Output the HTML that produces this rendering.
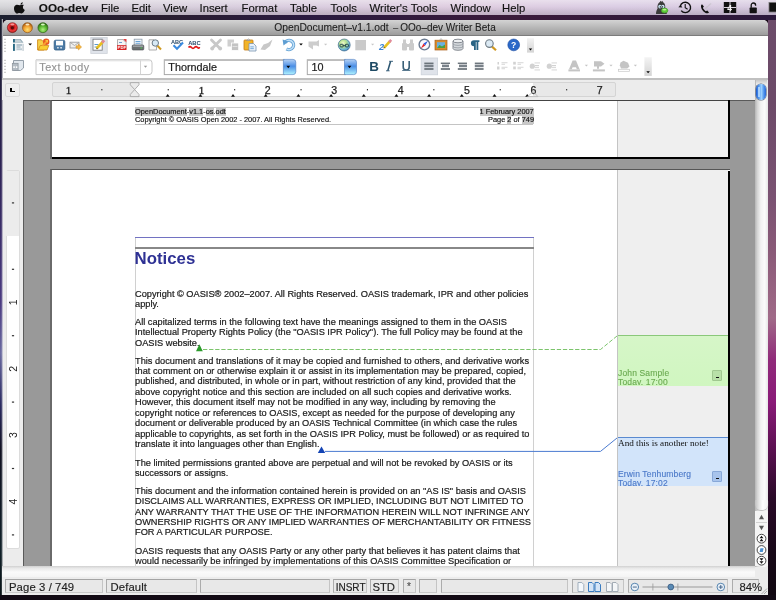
<!DOCTYPE html>
<html><head><meta charset="utf-8">
<style>
*{margin:0;padding:0;box-sizing:border-box}
html,body{width:776px;height:600px;overflow:hidden}
body{position:relative;will-change:transform;font-family:"Liberation Sans",sans-serif;background:#1a0c1a}
.a{position:absolute}
.doctext{position:absolute;left:0;top:0;will-change:transform}
.t{position:absolute;white-space:pre;line-height:1}
.dl{position:absolute;left:135px;white-space:pre;font-size:9.22px;-webkit-text-stroke:0.2px #222;line-height:1;color:#161616}
.hd{position:absolute;white-space:pre;font-size:7.4px;line-height:7.6px;color:#111;-webkit-text-stroke:0.15px #111}
.cn{position:absolute;white-space:pre;font-size:8.5px;line-height:9px;letter-spacing:0.15px;-webkit-text-stroke:0.12px currentColor}
.btn{position:absolute;width:10px;height:10.5px;background:#b8e0a8;border:1px solid #a0c890;border-radius:1px}
.btn:after{content:"";position:absolute;left:3px;top:5.5px;width:3px;height:1.5px;background:#111}
.m{position:absolute;top:1.5px;font-size:11.3px;color:#111;white-space:pre;line-height:12px;-webkit-text-stroke:0.15px #111}
.sb{position:absolute;top:579.2px;height:14px;background:#e8e8e8;border-style:solid;border-width:1.5px 1px 1px 1.5px;border-color:#a4a4a4 #c4c4c4 #cacaca #acacac}
.sb span{position:absolute;top:0.7px;white-space:pre;font-size:11.3px;line-height:12px;color:#222;-webkit-text-stroke:0.15px #222}
</style></head><body>
<div class="a" style="left:768px;top:0;width:8px;height:600px;background:linear-gradient(180deg,#6c4c6a 0%,#6c4a68 17%,#7a5272 33%,#8a5a78 42%,#a06a88 53%,#902a7a 60%,#8a1a78 67%,#5a1050 75%,#2a0a28 83%,#180818 92%,#100810 100%)"></div>
<div class="a" style="left:0;top:595px;width:776px;height:5px;background:#120a14"></div>
<div class="a" style="left:0;top:15px;width:776px;height:5px;background:linear-gradient(90deg,#1c2030 0%,#2a1e30 20%,#2a1a40 40%,#3a1a3a 65%,#2c1a3c 100%)"></div>
<div class="a" style="left:0;top:19px;width:3px;height:576px;background:linear-gradient(90deg,rgba(236,236,236,0) 0%,rgba(236,236,236,0) 40%,rgba(236,236,236,0.55) 75%,#e4e4e8 100%),linear-gradient(180deg,#1a1e2c 0%,#2a2050 23%,#4a3a80 49%,#6a6aa0 58%,#2a2a60 67%,#101020 75%,#102028 92%,#0a1418 100%)"></div>
<div id="menubar" class="a" style="left:0;top:0;width:776px;height:15px;background:linear-gradient(180deg,rgba(255,255,255,0.45) 0%,rgba(255,255,255,0.12) 45%,rgba(0,0,0,0.12) 100%),linear-gradient(90deg,#cfcfd3 0%,#d2ccd6 12%,#d4c6da 35%,#dac6dc 60%,#d6c6e0 80%,#d2c4dc 100%)">
  <div class="m" style="left:38.8px;font-weight:bold;font-size:11.7px">OOo-dev</div>
  <div class="m" style="left:101px">File</div>
  <div class="m" style="left:131.5px">Edit</div>
  <div class="m" style="left:163px">View</div>
  <div class="m" style="left:199.5px">Insert</div>
  <div class="m" style="left:241.5px">Format</div>
  <div class="m" style="left:290px">Table</div>
  <div class="m" style="left:330.5px">Tools</div>
  <div class="m" style="left:369.5px;font-size:11.45px">Writer's Tools</div>
  <div class="m" style="left:450.5px">Window</div>
  <div class="m" style="left:502px">Help</div>
</div>
<!-- window -->
<div class="a" style="left:2.6px;top:19.5px;width:765.4px;height:575.5px;background:#ececec;border-radius:5px 5px 0 0;overflow:hidden">
  <div class="a" style="left:0;top:0;width:766px;height:16.5px;background:linear-gradient(180deg,#d4d4d4 0%,#bababa 45%,#9c9c9c 100%);border-bottom:1px solid #7c7c7c"></div>
  <div class="t" style="left:271.6px;top:2.6px;font-size:10.3px;line-height:12px;color:#222;-webkit-text-stroke:0.1px #222">OpenDocument–v1.1.odt</div><div class="t" style="left:390.5px;top:2.6px;font-size:9.5px;line-height:12px;color:#222">–</div><div class="t" style="left:397.7px;top:2.6px;font-size:10.0px;line-height:12px;color:#222;-webkit-text-stroke:0.1px #222">OOo–dev Writer Beta</div>
  <div class="a" style="left:0;top:16.5px;width:766px;height:43px;background:#fff"></div>
  <div class="a" style="left:0;top:59.5px;width:766px;height:1px;background:#a8a8a8"></div>
</div>
<svg class="a" style="left:0;top:0" width="776" height="100">
 <defs>
  <linearGradient id="blueBtn" x1="0" y1="0" x2="0" y2="1">
   <stop offset="0" stop-color="#b4d0f4"/><stop offset="0.45" stop-color="#4a8ee6"/><stop offset="1" stop-color="#b0f4ff"/>
  </linearGradient>
  <linearGradient id="ovf" x1="0" y1="0" x2="0" y2="1">
   <stop offset="0" stop-color="#f4f4f4"/><stop offset="1" stop-color="#d4d4d4"/>
  </linearGradient>
  <radialGradient id="globe" cx="0.4" cy="0.35" r="0.7">
   <stop offset="0" stop-color="#f4fcd0"/><stop offset="0.4" stop-color="#b4e090"/><stop offset="0.75" stop-color="#70b8d4"/><stop offset="1" stop-color="#3a7ab4"/>
  </radialGradient>
 </defs>
 <!-- grips -->
 <g fill="#c4c4c4">
  <rect x="4" y="38.8" width="2" height="1"/><rect x="4" y="41.8" width="2" height="1"/><rect x="4" y="44.8" width="2" height="1"/><rect x="4" y="47.8" width="2" height="1"/><rect x="4" y="50.8" width="2" height="1"/>
  <rect x="4" y="59.8" width="2" height="1"/><rect x="4" y="62.8" width="2" height="1"/><rect x="4" y="65.8" width="2" height="1"/><rect x="4" y="68.8" width="2" height="1"/><rect x="4" y="71.8" width="2" height="1"/>
 </g>
 <!-- new doc -->
 <path d="M13 39 H20.5 L23.2 42.2 V43 H13 Z" fill="#8aa4b0"/>
 <path d="M15 39.6 H19.8 L22 42.2 H15 Z" fill="#c4d0d6"/>
 <rect x="13" y="39" width="1.8" height="3.6" fill="#2a6a84"/>
 <rect x="12.6" y="42.6" width="11" height="1.3" fill="#f4f6f8"/>
 <rect x="13" y="43.9" width="10.5" height="7" fill="#eef2f4"/>
 <rect x="13" y="43.9" width="1.9" height="7" fill="#2a6a84"/>
 <rect x="22.6" y="43.9" width="1" height="7" fill="#b8c4ca"/>
 <rect x="16.5" y="44.5" width="5.5" height="1" fill="#7a96a8"/><rect x="16.5" y="46.5" width="4" height="1" fill="#8aa2b2"/><rect x="16.5" y="48.5" width="5.5" height="1.2" fill="#a8bac6"/>
 <path d="M28.3 43.5 H32 L30.15 45.5 Z" fill="#000"/>
 <!-- open folder -->
 <path d="M37.6 39.8 H41.5 L42.5 41 H44 V50 H37.6 Z" fill="#f6d24a" stroke="#d08a18" stroke-width="0.9"/>
 <path d="M38.2 50 L40.2 45.5 H48.8 L47 50 Z" fill="#f8d030" stroke="#d08a18" stroke-width="0.8"/>
 <circle cx="46.2" cy="41.8" r="3.2" fill="#e85a20"/>
 <path d="M42.5 45.8 L47.2 40.8" stroke="#f8a030" stroke-width="1.8"/>
 <path d="M45 40 H48 V43 Z" fill="#fcc040"/>
 <!-- save -->
 <rect x="54.2" y="40.2" width="10.6" height="9.8" rx="1.5" fill="#4a7aa6" stroke="#2e5a84" stroke-width="0.8"/>
 <rect x="56" y="40.8" width="7" height="4.6" fill="#fafcfd"/>
 <rect x="57" y="47" width="1.8" height="1.5" fill="#cfdae4"/><rect x="60.2" y="47" width="1.8" height="1.5" fill="#cfdae4"/>
 <!-- email -->
 <rect x="70" y="42.2" width="9" height="5.8" fill="#f0f0f0" stroke="#9a9a9a" stroke-width="0.9"/>
 <path d="M70.5 42.7 L74.5 45.5 L78.5 42.7" stroke="#a0a0a0" stroke-width="0.8" fill="none"/>
 <path d="M76 45.8 H78.4 V44 L81.6 47 L78.4 50 V48.2 H76 Z" fill="#f6b840" stroke="#d08a20" stroke-width="0.5"/>
 <!-- edit mode pressed -->
 <rect x="90.8" y="37.4" width="16.4" height="16" fill="#dfe3ea" stroke="#ccd1d8" stroke-width="0.8"/>
 <rect x="93" y="39.2" width="9.2" height="11" fill="#fff" stroke="#787c82" stroke-width="0.9"/>
 <rect x="94.5" y="44" width="4" height="1" fill="#5a9ad0"/><rect x="94.5" y="46.5" width="3" height="1" fill="#5a9ad0"/>
 <path d="M96.5 48.5 L103.2 41.5" stroke="#e8c020" stroke-width="2.6"/>
 <path d="M102 42.7 L104.3 40.3" stroke="#e08a9a" stroke-width="2.6"/>
 <path d="M96 49.2 L97 47.8 L97.8 48.6 Z" fill="#333"/>
 <!-- pdf -->
 <path d="M117.5 39.5 H123 L126 42.5 V49.5 H117.5 Z" fill="#f4f4f4" stroke="#a8a8a8" stroke-width="0.9"/>
 <rect x="119" y="42" width="3" height="1" fill="#6aa0d0"/>
 <rect x="117" y="45.2" width="9.4" height="4.8" fill="#d82020"/>
 <text x="117.6" y="49.4" font-family="Liberation Sans" font-weight="bold" font-size="4.2" fill="#fff">PDF</text>
 <path d="M123 39 L126.5 39 L126.5 42.5 Z" fill="#e04040"/>
 <!-- print -->
 <rect x="134.2" y="39.2" width="7.8" height="6" fill="#f4f6fa" stroke="#8a9aa8" stroke-width="0.8"/>
 <rect x="135.5" y="41" width="5" height="0.9" fill="#5a9ad0"/><rect x="135.5" y="42.8" width="5" height="0.9" fill="#5a9ad0"/>
 <rect x="132.2" y="45" width="11.6" height="5" rx="1" fill="#6a6e70" stroke="#4a4e50" stroke-width="0.6"/>
 <rect x="133" y="45.4" width="10" height="1.6" fill="#9a9ea2"/>
 <rect x="140.5" y="47.5" width="1.6" height="1" fill="#4ad04a"/>
 <!-- preview -->
 <path d="M149 39.8 H154 L156.5 42.3 V50 H149 Z" fill="#f8f8f8" stroke="#a4a4a4" stroke-width="0.9"/>
 <path d="M157.5 45.8 L161 49.5" stroke="#d09a20" stroke-width="2"/>
 <circle cx="155.3" cy="43" r="3.2" fill="#d8eaf6" stroke="#6a7a86" stroke-width="1"/>
 <!-- spell -->
 <text x="171" y="43.6" font-family="Liberation Sans" font-weight="bold" font-size="5.6" fill="#2a4a6a">ABC</text>
 <path d="M173.5 45.3 L177 48.8 L183 42.5" stroke="#3a8ae0" stroke-width="2.1" fill="none"/>
 <!-- autospell -->
 <text x="188.2" y="45" font-family="Liberation Sans" font-weight="bold" font-size="5.8" fill="#2a4a6a">ABC</text>
 <path d="M188.5 47.5 Q190 45.8 191.5 47.5 T194.5 47.5 T197.5 47.5 T199.5 47" stroke="#e01818" stroke-width="1.6" fill="none"/>
 <!-- cut gray -->
 <g stroke="#c8c8c8" stroke-width="2.8" stroke-linecap="round" fill="none">
  <path d="M211.5 40 L220 48.5"/><path d="M220.5 40 L212 48.5"/>
 </g>
 <circle cx="212.2" cy="48.5" r="1.9" fill="#c8c8c8"/><circle cx="220.2" cy="48.5" r="1.9" fill="#c8c8c8"/>
 <!-- copy gray -->
 <rect x="227.5" y="39.5" width="6.5" height="7" fill="#cfcfcf"/>
 <rect x="231.5" y="43" width="7.2" height="7.5" fill="#c4c4c4" stroke="#fff" stroke-width="0.8"/>
 <rect x="232.5" y="46" width="5" height="0.8" fill="#e8e8e8"/>
 <!-- paste -->
 <rect x="244" y="40" width="9" height="10" rx="0.8" fill="#f2b428" stroke="#c47a10" stroke-width="0.8"/>
 <path d="M246.5 40.5 Q248.5 37.5 250.5 40.5 Z" fill="#d8d8d8" stroke="#8a8a8a" stroke-width="0.6"/>
 <path d="M249 43.5 H253.5 L256 46 V51 H249 Z" fill="#eaf2fa" stroke="#7a96b0" stroke-width="0.8"/>
 <rect x="250.3" y="46.5" width="3.5" height="0.8" fill="#5a9ad0"/><rect x="250.3" y="48.3" width="3.5" height="0.8" fill="#5a9ad0"/>
 <!-- clone format gray -->
 <path d="M260.5 49.5 L263.5 44.5 L268 43 L272.5 39.5 L270 46 L265 50 Z" fill="#c8c8c8"/>
 <!-- undo -->
 <path d="M285 42.8 A4.6 4.6 0 1 1 286.5 48.8" stroke="#5e9ed2" stroke-width="3.2" fill="none"/>
 <path d="M285 42.8 A4.6 4.6 0 1 1 286.5 48.8" stroke="#c0e0f8" stroke-width="1.6" fill="none"/>
 <path d="M282.6 39.5 L288.5 41.5 L283.5 45.5 Z" fill="#5e9ed2"/>
 <path d="M299.2 43.5 H302.8 L301 45.5 Z" fill="#000"/>
 <!-- redo gray -->
 <path d="M308.5 41.5 H316.5 L319 40 V46.5 L316.5 45.5 H313 V49.5 L308.5 46.5 Z" fill="#cdcdcd"/>
 <path d="M324 43.8 H327.2 L325.6 45.6 Z" fill="#c8c8c8"/>
 <!-- globe -->
 <circle cx="344.2" cy="45" r="6" fill="url(#globe)" stroke="#2a5a80" stroke-width="0.6"/>
 <rect x="340" y="44.3" width="3.3" height="2.6" rx="0.8" fill="none" stroke="#2a4a50" stroke-width="1"/>
 <rect x="345.2" y="44.3" width="3.3" height="2.6" rx="0.8" fill="none" stroke="#2a4a50" stroke-width="1"/>
 <rect x="342.5" y="45.2" width="3.5" height="0.9" fill="#2a4a50"/>
 <!-- table gray -->
 <rect x="355.3" y="40" width="10.7" height="10.3" fill="#cacaca"/>
 <path d="M371 43.8 H374.2 L372.6 45.6 Z" fill="#c8c8c8"/>
 <!-- draw -->
 <text x="379" y="49.6" font-family="Liberation Sans" font-weight="bold" font-size="9.2" font-style="italic" fill="#3a84d8">2</text>
 <path d="M384 47.8 L390 41.2" stroke="#e8c020" stroke-width="2.6"/>
 <path d="M389.2 42.1 L391.2 39.9" stroke="#e08a9a" stroke-width="2.6"/>
 <path d="M383.3 48.6 L384 47 L385 47.8 Z" fill="#333"/>
 <!-- binoculars gray -->
 <g fill="#cbcbcb">
  <rect x="403" y="39.5" width="3" height="4"/><rect x="410" y="39.5" width="3" height="4"/>
  <rect x="402" y="43" width="5" height="7.5" rx="1"/><rect x="409" y="43" width="5" height="7.5" rx="1"/>
  <rect x="406" y="44" width="4" height="3"/>
 </g>
 <!-- navigator compass -->
 <circle cx="424.4" cy="44.6" r="5.3" fill="#f8f8fc" stroke="#6a7a90" stroke-width="1.4"/>
 <path d="M420.8 48.4 L423.6 43.6 L425.2 45.6 Z" fill="#e82424"/>
 <path d="M428 40.8 L423.6 43.6 L425.2 45.6 Z" fill="#2a5ae0"/>
 
 <!-- gallery -->
 <rect x="435" y="40.2" width="12" height="9.8" fill="#d88c2c" stroke="#a8601a" stroke-width="0.7"/>
 <rect x="437" y="42.2" width="8" height="5.8" fill="#6ab0e0"/>
 <path d="M437 48 L439.5 45 L442 46.5 L445 44.5 V48 Z" fill="#4aa040"/>
 <path d="M439.5 40.2 L441 38.6 L442.5 40.2" stroke="#888" stroke-width="0.6" fill="none"/>
 <!-- database -->
 <path d="M453 41 V48.5 A5 1.8 0 0 0 463 48.5 V41" fill="#d4d8dc" stroke="#7a8088" stroke-width="0.9"/>
 <ellipse cx="458" cy="41" rx="5" ry="1.8" fill="#eef0f2" stroke="#7a8088" stroke-width="0.9"/>
 <path d="M453 43.6 A5 1.8 0 0 0 463 43.6 M453 46.1 A5 1.8 0 0 0 463 46.1" stroke="#8a9098" stroke-width="0.7" fill="none"/>
 <!-- pilcrow -->
 <path d="M474 40.2 H479.4 V42 H478.3 V50 H476.5 V42 H475.8 V50 H474 V46.2 A3.1 3 0 0 1 474 40.2 Z" fill="#2a6484"/>
 <!-- zoom -->
 <path d="M492 46.6 L496 50.2" stroke="#d09820" stroke-width="2.2"/>
 <circle cx="489.4" cy="43.6" r="3.8" fill="#dceaf4" stroke="#6e7a84" stroke-width="1.1"/>
 <!-- help -->
 <circle cx="513.7" cy="44.9" r="5.9" fill="#2a68c8" stroke="#1a4aa0" stroke-width="0.6"/>
 <text x="510.9" y="48.4" font-family="Liberation Sans" font-weight="bold" font-size="8.6" fill="#fff">?</text>
 <!-- overflow 1 -->
 <rect x="527" y="38.2" width="7" height="14.4" fill="url(#ovf)"/>
 <path d="M528.8 48.6 H532.2 L530.5 50.4 Z" fill="#000"/>

 <!-- ===== toolbar 2 ===== -->
 <!-- styles icon -->
 <path d="M13.5 60.5 H23.5 V68 L20.5 70.5 H13.5 Z" fill="#e2e8ee" stroke="#8a96a2" stroke-width="0.9"/>
 <rect x="12.3" y="63.3" width="5.8" height="7.2" fill="#b4bcc4" stroke="#8a929a" stroke-width="0.7"/>
 <rect x="13.3" y="66.3" width="1.5" height="1.7" fill="#fff"/><rect x="15.8" y="66.3" width="1.5" height="1.7" fill="#fff"/>
 <!-- text body combo -->
 <path d="M36 59.8 H149 Q152 59.8 152 62.8 V71.6 Q152 74.6 149 74.6 H36 Z" fill="#fff" stroke="#c6c6c6" stroke-width="1"/>
 <rect x="36.5" y="60.3" width="114" height="1" fill="#dedede"/>
 <rect x="140" y="60.3" width="1" height="14" fill="#d4d4d4"/>
 <path d="M143.8 65.8 H147.2 L145.5 67.8 Z" fill="#999"/>
 <!-- font combo -->
 <rect x="164.3" y="59.8" width="120" height="14.8" fill="#fff" stroke="#a8a8a8" stroke-width="1"/>
 <rect x="164.8" y="59.6" width="119" height="1.4" fill="#bdbdbd"/>
 <path d="M283.4 59.4 H293 Q295.8 59.4 295.8 62.2 V71.8 Q295.8 74.6 293 74.6 H283.4 Z" fill="url(#blueBtn)" stroke="#4a7ac0" stroke-width="0.6"/>
 <path d="M286.4 65.8 H290.2 L288.3 68.2 Z" fill="#000"/>
 <!-- size combo -->
 <rect x="307.3" y="59.8" width="38" height="14.8" fill="#fff" stroke="#a8a8a8" stroke-width="1"/>
 <rect x="307.8" y="59.6" width="37" height="1.4" fill="#bdbdbd"/>
 <path d="M344.5 59.4 H353.7 Q356.5 59.4 356.5 62.2 V71.8 Q356.5 74.6 353.7 74.6 H344.5 Z" fill="url(#blueBtn)" stroke="#4a7ac0" stroke-width="0.6"/>
 <path d="M347.6 65.8 H351.4 L349.5 68.2 Z" fill="#000"/>
 <!-- B I U -->
 <text x="369.3" y="70.8" font-family="Liberation Sans" font-weight="bold" font-size="13.4" fill="#1e4a64">B</text>
 <path d="M390.6 61.3 L387.8 70.8" stroke="#2a5470" stroke-width="1.5"/>
 <path d="M389.2 61.3 H393 M386 70.8 H389.6" stroke="#2a5470" stroke-width="0.9"/>
 <path d="M403.2 61 V67 A3 3 0 0 0 409.2 67 V61" stroke="#3a6078" stroke-width="1.6" fill="none"/>
 <rect x="402.2" y="70" width="8.2" height="1" fill="#5a7a90"/>
 <!-- align -->
 <rect x="421.2" y="58" width="16.4" height="16.8" fill="#dfe3ea" stroke="#ccd2da" stroke-width="0.8"/>
 <g fill="#5e666e">
  <rect x="424.3" y="62.6" width="9.2" height="1.3"/><rect x="424.3" y="64.6" width="9.2" height="2.6" fill="#7a828a"/><rect x="424.3" y="68.2" width="9.2" height="1.6"/>
  <rect x="440.8" y="62.6" width="9.2" height="1.3"/><rect x="442" y="64.6" width="7" height="2.6" fill="#7a828a"/><rect x="440.8" y="68.2" width="9.2" height="1.6"/>
  <rect x="457.8" y="62.6" width="9.2" height="1.3"/><rect x="459" y="64.6" width="8" height="2.6" fill="#7a828a"/><rect x="457.8" y="68.2" width="9.2" height="1.6"/>
  <rect x="474.8" y="62.6" width="8.8" height="1.3"/><rect x="474.8" y="64.6" width="8.8" height="2.6" fill="#7a828a"/><rect x="474.8" y="68.2" width="8.8" height="1.6"/>
 </g>
 <!-- gray list icons -->
 <g fill="#d2d2d2">
  <rect x="497.5" y="62" width="1.5" height="2.5"/><rect x="497" y="66.5" width="2.5" height="3"/>
  <rect x="501.5" y="62.3" width="6" height="0.9"/><rect x="501.5" y="63.8" width="3.5" height="0.9"/><rect x="501.5" y="66.8" width="6" height="0.9"/><rect x="501.5" y="68.3" width="3.5" height="0.9"/>
  <rect x="513.2" y="61.8" width="2.6" height="2.8"/><rect x="513.2" y="66.5" width="2.6" height="2.8"/>
  <rect x="517.5" y="62.3" width="6" height="0.9"/><rect x="517.5" y="63.8" width="3.5" height="0.9"/><rect x="517.5" y="66.8" width="6" height="0.9"/><rect x="517.5" y="68.3" width="3.5" height="0.9"/>
  <circle cx="532.3" cy="66.2" r="2.6"/><rect x="534.5" y="62.5" width="5.5" height="0.9"/><rect x="535" y="65" width="4" height="1.2"/><rect x="535" y="67.2" width="4" height="0.9"/><rect x="534.5" y="69.5" width="5.5" height="0.9"/>
  <circle cx="549.3" cy="66.2" r="2.6"/><rect x="551.5" y="62.5" width="5.5" height="0.9"/><rect x="552" y="65" width="4" height="1.2"/><rect x="552" y="67.2" width="4" height="0.9"/><rect x="551.5" y="69.5" width="5.5" height="0.9"/>
 </g>
 <!-- font color etc gray -->
 <g fill="#c4c4c4">
  <path d="M569 69.2 L572.6 60.4 H576 L579.6 69.2 H576.8 L576 67.2 H572.6 L571.8 69.2 Z"/>
  <rect x="568.4" y="69.4" width="11.6" height="2"/>
  <path d="M584.8 64.8 H588 L586.4 66.6 Z"/>
  <path d="M594 61.2 H601 L604.5 63.8 L601 66.4 H599 V68.8 H597 V66.4 H594 Z"/>
  <rect x="592.9" y="69.4" width="12" height="2"/>
  <path d="M609.4 64.8 H612.6 L611 66.6 Z"/>
  <path d="M620.5 62.5 L623.5 60.8 L628 62.8 L629.5 66.5 L627.2 68.6 H621 L619.8 65.2 Z"/>
  <path d="M633.8 64.8 H637 L635.4 66.6 Z"/>
 </g>
 <rect x="618.5" y="69.3" width="11" height="2" fill="none" stroke="#c8c8c8" stroke-width="0.7"/>
 <!-- overflow 2 -->
 <rect x="644.4" y="57.2" width="7.4" height="18.7" fill="url(#ovf)"/>
 <path d="M646.3 71.3 H649.9 L648.1 73.2 Z" fill="#000"/>
</svg>
<div class="t" style="left:39.3px;top:62px;font-size:10.8px;letter-spacing:0.45px;color:#949494;-webkit-text-stroke:0.15px #949494">Text body</div>
<div class="t" style="left:168.3px;top:62px;font-size:10.8px;color:#1a1a1a;-webkit-text-stroke:0.2px #1a1a1a">Thorndale</div>
<div class="t" style="left:311.5px;top:62px;font-size:10.8px;color:#1a1a1a;-webkit-text-stroke:0.2px #1a1a1a">10</div>
<div class="a" style="left:2px;top:78px;width:766px;height:1.5px;background:#c0c0c0"></div>
<div class="a" style="left:2px;top:79.5px;width:754px;height:20.5px;background:#ececec"></div>
<div class="a" style="left:5px;top:82.5px;width:14.5px;height:14px;background:#efefef;border:1px solid #dadada;border-radius:2px"></div>
<div class="a" style="left:10px;top:88px;width:1.6px;height:4.4px;background:#000"></div>
<div class="a" style="left:10px;top:90.8px;width:5px;height:1.6px;background:#000"></div>
<div class="a" style="left:51.8px;top:82.4px;width:564.4px;height:14.4px;background:#e8e8e8;border:1px solid #d4d4d4;border-radius:2px"></div>
<div class="a" style="left:135px;top:83.4px;width:398.2px;height:12.6px;background:#fff"></div>
<svg class="a" style="left:0;top:0" width="776" height="100">
<text x="68.6" y="93.8" text-anchor="middle" font-family="Liberation Serif" font-size="11" fill="#222" stroke="#222" stroke-width="0.35">1</text>
<text x="201.4" y="93.8" text-anchor="middle" font-family="Liberation Serif" font-size="11" fill="#222" stroke="#222" stroke-width="0.35">1</text>
<text x="267.8" y="93.6" text-anchor="middle" font-family="Liberation Sans" font-size="10.6" fill="#222" stroke="#222" stroke-width="0.25">2</text>
<text x="334.2" y="93.6" text-anchor="middle" font-family="Liberation Sans" font-size="10.6" fill="#222" stroke="#222" stroke-width="0.25">3</text>
<text x="400.6" y="93.6" text-anchor="middle" font-family="Liberation Sans" font-size="10.6" fill="#222" stroke="#222" stroke-width="0.25">4</text>
<text x="467.0" y="93.6" text-anchor="middle" font-family="Liberation Sans" font-size="10.6" fill="#222" stroke="#222" stroke-width="0.25">5</text>
<text x="533.4" y="93.6" text-anchor="middle" font-family="Liberation Sans" font-size="10.6" fill="#222" stroke="#222" stroke-width="0.25">6</text>
<text x="599.8" y="93.6" text-anchor="middle" font-family="Liberation Sans" font-size="10.6" fill="#222" stroke="#222" stroke-width="0.25">7</text>
<rect x="101.3" y="89" width="1.1" height="1.4" fill="#333"/>
<rect x="167.7" y="89" width="1.1" height="1.4" fill="#333"/>
<rect x="234.1" y="89" width="1.1" height="1.4" fill="#333"/>
<rect x="300.5" y="89" width="1.1" height="1.4" fill="#333"/>
<rect x="366.9" y="89" width="1.1" height="1.4" fill="#333"/>
<rect x="433.3" y="89" width="1.1" height="1.4" fill="#333"/>
<rect x="499.7" y="89" width="1.1" height="1.4" fill="#333"/>
<rect x="566.1" y="89" width="1.1" height="1.4" fill="#333"/>
<path d="M165.7 96.8 L167.7 94 L169.7 96.8 Z" fill="#111"/>
<path d="M198.4 96.8 L200.4 94 L202.4 96.8 Z" fill="#111"/>
<path d="M231.0 96.8 L233.0 94 L235.0 96.8 Z" fill="#111"/>
<path d="M263.7 96.8 L265.7 94 L267.7 96.8 Z" fill="#111"/>
<path d="M296.4 96.8 L298.4 94 L300.4 96.8 Z" fill="#111"/>
<path d="M329.1 96.8 L331.1 94 L333.1 96.8 Z" fill="#111"/>
<path d="M361.8 96.8 L363.8 94 L365.8 96.8 Z" fill="#111"/>
<path d="M394.4 96.8 L396.4 94 L398.4 96.8 Z" fill="#111"/>
<path d="M427.1 96.8 L429.1 94 L431.1 96.8 Z" fill="#111"/>
<path d="M459.8 96.8 L461.8 94 L463.8 96.8 Z" fill="#111"/>
<path d="M492.5 96.8 L494.5 94 L496.5 96.8 Z" fill="#111"/>
<path d="M525.2 96.8 L527.2 94 L529.2 96.8 Z" fill="#111"/>
<path d="M130.3 82.6 H139 V84.8 L134.65 89.6 L130.3 84.8 Z M130.3 96.6 H139 V94.4 L134.65 89.6 L130.3 94.4 Z" fill="#ebebeb" stroke="#a8a8a8" stroke-width="0.9"/>
<path d="M527.6 96.6 H538 L533.2 91.6 Z" fill="none" stroke="#b8b8b8" stroke-width="0.8"/>
</svg>
<div class="a" style="left:5.5px;top:170px;width:14.3px;height:378.5px;background:#fff;border:1px solid #dcdcdc;border-radius:2px"></div>
<div class="a" style="left:6px;top:170.5px;width:13.3px;height:65.5px;background:#ececec"></div>
<svg class="a" style="left:0;top:100px" width="24" height="466">
<text transform="translate(17.2 202.4) rotate(-90)" text-anchor="middle" font-family="Liberation Sans" font-size="10.5" fill="#222">1</text>
<text transform="translate(17.2 268.8) rotate(-90)" text-anchor="middle" font-family="Liberation Sans" font-size="10.5" fill="#222">2</text>
<text transform="translate(17.2 335.2) rotate(-90)" text-anchor="middle" font-family="Liberation Sans" font-size="10.5" fill="#222">3</text>
<text transform="translate(17.2 401.6) rotate(-90)" text-anchor="middle" font-family="Liberation Sans" font-size="10.5" fill="#222">4</text>
<rect x="11.9" y="102.3" width="2.2" height="1.2" fill="#333"/>
<rect x="11.9" y="168.7" width="2.2" height="1.2" fill="#333"/>
<rect x="11.9" y="235.1" width="2.2" height="1.2" fill="#333"/>
<rect x="11.9" y="301.5" width="2.2" height="1.2" fill="#333"/>
<rect x="11.9" y="367.9" width="2.2" height="1.2" fill="#333"/>
<rect x="11.9" y="434.3" width="2.2" height="1.2" fill="#333"/>
</svg>
<div id="docwrap" class="a" style="left:0;top:100px;width:756px;height:466px;overflow:hidden">
  <div class="a" style="left:23px;top:0;width:733px;height:466px;background:#999;border-left:1px solid #5a5a5a;border-top:1px solid #5a5a5a"></div>
  <!-- page 2 -->
  <div class="a" style="left:50px;top:0;width:680px;height:59px;background:#fff;border-left:2px solid #6a6a6a;border-top:1px solid #444"></div>
  <div class="a" style="left:52px;top:57px;width:678px;height:2px;background:#000"></div>
  <div class="a" style="left:728px;top:0;width:2px;height:59px;background:#000"></div>
  <div class="a" style="left:617px;top:1px;width:111px;height:56px;background:#efefef;border-left:1px solid #c4c4c4"></div>
  <!-- header -->
  <div class="a" style="left:135px;top:7px;width:398px;height:1px;background:#c8c8c8"></div>
  <div class="a" style="left:135px;top:23.5px;width:398px;height:1px;background:#c4c4c4"></div>
  <div class="hd" style="left:135px;top:8px"><span style="background:#c8c8c8">OpenDocument</span>-<span style="background:#c8c8c8">v1.1</span>-<span style="background:#c8c8c8">os</span>.<span style="background:#c8c8c8">odt</span></div>
  <div class="hd" style="left:135px;top:15.6px">Copyright © OASIS Open 2002 - 2007. All Rights Reserved.</div>
  <div class="hd" style="left:479.5px;top:8px;background:#c8c8c8">1 February 2007</div>
  <div class="hd" style="left:488px;top:15.6px">Page <span style="background:#c8c8c8">2</span> of <span style="background:#c8c8c8">749</span></div>
  <!-- page 3 -->
  <div class="a" style="left:50px;top:69px;width:680px;height:420px;background:#fff;border-left:2px solid #6a6a6a;border-top:1px solid #555"></div>
  <div class="a" style="left:728px;top:71px;width:2px;height:420px;background:#000"></div>
  <div class="a" style="left:617px;top:70px;width:111px;height:420px;background:#efefef;border-left:1px solid #c4c4c4"></div>
  <!-- text boundaries -->
  <div class="a" style="left:135px;top:137px;width:1px;height:340px;background:#d0d0d0"></div>
  <div class="a" style="left:533px;top:137px;width:1px;height:340px;background:#d0d0d0"></div>
  <div class="a" style="left:135px;top:136.5px;width:399px;height:1.2px;background:#7272c2"></div>
  <div class="a" style="left:135px;top:147.4px;width:399px;height:1.2px;background:#888"></div>
  <div class="t" style="left:134.6px;top:150.6px;font-size:16.8px;font-weight:bold;color:#2e3194;line-height:16px">Notices</div>
  <div class="doctext">
<div class="dl" style="top:189.51px">Copyright © OASIS® 2002–2007. All Rights Reserved. OASIS trademark, IPR and other policies</div>
<div class="dl" style="top:199.91px">apply.</div>
<div class="dl" style="top:217.91px">All capitalized terms in the following text have the meanings assigned to them in the OASIS</div>
<div class="dl" style="top:228.31px">Intellectual Property Rights Policy (the &quot;OASIS IPR Policy&quot;). The full Policy may be found at the</div>
<div class="dl" style="top:238.71px">OASIS website.</div>
<div class="dl" style="top:256.51px">This document and translations of it may be copied and furnished to others, and derivative works</div>
<div class="dl" style="top:267.01px">that comment on or otherwise explain it or assist in its implementation may be prepared, copied,</div>
<div class="dl" style="top:277.41px">published, and distributed, in whole or in part, without restriction of any kind, provided that the</div>
<div class="dl" style="top:287.81px">above copyright notice and this section are included on all such copies and derivative works.</div>
<div class="dl" style="top:298.21px">However, this document itself may not be modified in any way, including by removing the</div>
<div class="dl" style="top:308.61px">copyright notice or references to OASIS, except as needed for the purpose of developing any</div>
<div class="dl" style="top:319.01px">document or deliverable produced by an OASIS Technical Committee (in which case the rules</div>
<div class="dl" style="top:329.51px">applicable to copyrights, as set forth in the OASIS IPR Policy, must be followed) or as required to</div>
<div class="dl" style="top:339.91px">translate it into languages other than English.</div>
<div class="dl" style="top:358.61px">The limited permissions granted above are perpetual and will not be revoked by OASIS or its</div>
<div class="dl" style="top:369.01px">successors or assigns.</div>
<div class="dl" style="top:386.71px">This document and the information contained herein is provided on an &quot;AS IS&quot; basis and OASIS</div>
<div class="dl" style="top:397.11px">DISCLAIMS ALL WARRANTIES, EXPRESS OR IMPLIED, INCLUDING BUT NOT LIMITED TO</div>
<div class="dl" style="top:407.51px">ANY WARRANTY THAT THE USE OF THE INFORMATION HEREIN WILL NOT INFRINGE ANY</div>
<div class="dl" style="top:417.91px">OWNERSHIP RIGHTS OR ANY IMPLIED WARRANTIES OF MERCHANTABILITY OR FITNESS</div>
<div class="dl" style="top:428.31px">FOR A PARTICULAR PURPOSE.</div>
<div class="dl" style="top:446.51px">OASIS requests that any OASIS Party or any other party that believes it has patent claims that</div>
<div class="dl" style="top:457.01px">would necessarily be infringed by implementations of this OASIS Committee Specification or</div>
  </div>
  <!-- comment anchors -->
  <svg class="a" style="left:0;top:0" width="756" height="466">
    <polygon points="196,251.2 199.4,244.3 202.8,251.2" fill="#2a9a2a"/>
    <path d="M203 249.5 H600.5 L617 236" stroke="#7cc46c" stroke-width="1" fill="none" stroke-dasharray="4.3,1.8"/>
    <polygon points="317.8,352.9 321.5,346.6 325.2,352.9" fill="#1444b4"/>
    <path d="M325 351.4 H600.5 L617 338" stroke="#4a7ad0" stroke-width="1" fill="none"/>
  </svg>
  <!-- green note -->
  <div class="a" style="left:617.5px;top:235.4px;width:110.5px;height:50.3px;background:linear-gradient(180deg,#d6f6c8,#d0f6c0);border-top:1.5px solid #8ac87a"></div>
  <div class="cn" style="left:618px;top:269px;color:#6aaa50">John Sample</div>
  <div class="cn" style="left:618px;top:278px;color:#6aaa50;height:7px;overflow:hidden">Today, 17:00</div>
  <div class="btn" style="left:712px;top:270.2px;height:11px"></div>
  <!-- blue note -->
  <div class="a" style="left:617.5px;top:337.4px;width:110.5px;height:49px;background:#d2e4fa;border-top:1px solid #5a8ad0"></div>
  <div class="t" style="left:618px;top:339px;font-family:'Liberation Serif',serif;font-size:9.2px;color:#111">And this is another note!</div>
  <div class="cn" style="left:618px;top:370px;color:#4a78c8">Erwin Tenhumberg</div>
  <div class="cn" style="left:618px;top:379px;color:#4a78c8;height:7px;overflow:hidden">Today, 17:02</div>
  <div class="btn" style="left:712px;top:371px;background:#a8c4ec;border-color:#88a8d8"></div>
</div>
<!-- vertical scrollbar -->
<div class="a" style="left:755px;top:79.5px;width:13px;height:487px;background:linear-gradient(90deg,#b4b4b4 0%,#d4d4d4 18%,#f2f2f2 45%,#fbfbfb 75%,#e6e6e6 100%)"></div>
<div class="a" style="left:756px;top:79.5px;width:11px;height:5px;background:linear-gradient(180deg,#c8c8c8,#f0f0f0)"></div>
<div class="a" style="left:756.2px;top:84.4px;width:10.2px;height:16px;border-radius:5.1px;background:linear-gradient(90deg,#1a5ad0 0%,#5a9ef0 30%,#9ad0ff 55%,#4a90ec 80%,#2a68d8 100%);box-shadow:0 0 0 0.6px #5a6a80"></div>
<div class="a" style="left:758.4px;top:87px;width:1.6px;height:10px;background:#b8dcff;opacity:0.8"></div>
<div class="a" style="left:755px;top:500px;width:13px;height:10px;border-radius:0 0 6px 6px;background:linear-gradient(90deg,#c0c0c0 0%,#e4e4e4 30%,#fdfdfd 60%,#f0f0f0 100%);box-shadow:0 1px 1px #bbb"></div>
<div class="a" style="left:755px;top:511px;width:13px;height:55px;background:#f4f4f4"></div>
<svg class="a" style="left:750px;top:505px" width="20" height="65">
 <path d="M9 14.2 H14 L11.5 9.8 Z" fill="#555"/>
 <rect x="6" y="17" width="11" height="0.8" fill="#c8c8c8"/>
 <path d="M9 20.8 H14 L11.5 25.2 Z" fill="#555"/>
 <circle cx="11.5" cy="33.7" r="4.4" fill="#fff" stroke="#333" stroke-width="0.9"/>
 <path d="M9.5 33.3 H13.5 L11.5 30.8 Z M9.5 36.3 H13.5 L11.5 33.8 Z" fill="#111"/>
 <circle cx="11.5" cy="45" r="4.4" fill="#fff" stroke="#333" stroke-width="0.9"/>
 <path d="M9.6 47 L10.4 43.2 H13.6 L12.8 47 Z" fill="#4a90d0"/>
 <circle cx="11.5" cy="55.7" r="4.4" fill="#fff" stroke="#333" stroke-width="0.9"/>
 <path d="M9.5 53.2 H13.5 L11.5 55.7 Z M9.5 56.2 H13.5 L11.5 58.7 Z" fill="#111"/>
</svg>
<!-- horizontal bottom strip -->
<div class="a" style="left:2px;top:566px;width:753px;height:11px;background:linear-gradient(180deg,#d0d0d0 0%,#e8e8e8 20%,#fafafa 55%,#f4f4f4 100%)"></div>
<div class="a" style="left:2px;top:577px;width:766px;height:18px;background:#ececec"></div>
<!-- status boxes -->
<div class="sb" style="left:5.4px;width:97.4px"><span style="left:2.6px;letter-spacing:0.1px">Page 3 / 749</span></div>
<div class="sb" style="left:106.2px;width:91px"><span style="left:3.4px;letter-spacing:0.1px">Default</span></div>
<div class="sb" style="left:200.3px;width:129.7px"></div>
<div class="sb" style="left:333.3px;width:33.5px"><span style="left:1.4px;font-size:10px;top:1.5px">INSRT</span></div>
<div class="sb" style="left:370.4px;width:29px"><span style="left:1px">STD</span></div>
<div class="sb" style="left:402.7px;width:12.9px"><span style="left:3.4px;color:#666;font-size:10px;top:1px">*</span></div>
<div class="sb" style="left:419.2px;width:18px"></div>
<div class="sb" style="left:440.8px;width:127.3px"></div>
<div class="sb" style="left:572px;width:51.7px"></div>
<div class="sb" style="left:627.5px;width:100.5px"></div>
<div class="sb" style="left:732px;width:27px"><span style="left:6.5px">84%</span></div>
<svg class="a" style="left:570px;top:578px" width="200" height="18">
 <!-- layout icons -->
 <path d="M8 4.5 H11.8 L13.8 6.5 V13.5 H8 Z" fill="#f4f8fc" stroke="#98a8b8" stroke-width="0.9"/>
 <path d="M18.5 4.5 H22 L24 6.5 V13.5 H18.5 Z M25 4.5 H28.5 L30.5 6.5 V13.5 H25 Z" fill="#d4e4f6" stroke="#3a7cc0" stroke-width="1"/>
 <path d="M36.5 4.5 H40 L42 6.5 V13.5 H36.5 Z M42.5 4.5 H46 L48 6.5 V13.5 H42.5 Z" fill="#f4f6f8" stroke="#9aa4ae" stroke-width="0.9"/>
 <!-- zoom slider -->
 <circle cx="64.8" cy="9" r="3.8" fill="#e8f0f8" stroke="#4a7aa8" stroke-width="0.9"/>
 <rect x="62.8" y="8.6" width="4" height="0.9" fill="#3a5a80"/>
 <rect x="72.5" y="8.6" width="70" height="0.8" fill="#888"/>
 <rect x="82.5" y="5.5" width="0.8" height="7" fill="#999"/>
 <rect x="107.5" y="5.5" width="0.8" height="7" fill="#999"/>
 <circle cx="100.8" cy="9" r="2.9" fill="#5a8ab4" stroke="#3a5a80" stroke-width="0.8"/>
 <circle cx="150.8" cy="9" r="3.8" fill="#e8f0f8" stroke="#4a7aa8" stroke-width="0.9"/>
 <rect x="148.8" y="8.6" width="4" height="0.9" fill="#3a5a80"/><rect x="150.35" y="7" width="0.9" height="4" fill="#3a5a80"/>
 <!-- grip -->
 <path d="M191.5 16 L197 10.5 M194 16 L197 13" stroke="#9a9a9a" stroke-width="0.8"/>
</svg>
<svg class="a" style="left:0;top:0" width="776" height="40">
 <defs>
  <radialGradient id="tlr" cx="0.5" cy="0.45" r="0.55"><stop offset="0" stop-color="#7a1010"/><stop offset="0.35" stop-color="#c01818"/><stop offset="0.7" stop-color="#f03a3a"/><stop offset="1" stop-color="#9a1818"/></radialGradient>
  <radialGradient id="tlo" cx="0.5" cy="0.7" r="0.65"><stop offset="0" stop-color="#ffe070"/><stop offset="0.55" stop-color="#f0a030"/><stop offset="1" stop-color="#a85a10"/></radialGradient>
  <radialGradient id="tlg" cx="0.5" cy="0.7" r="0.65"><stop offset="0" stop-color="#b0f080"/><stop offset="0.55" stop-color="#5ab830"/><stop offset="1" stop-color="#2a6a10"/></radialGradient>
 </defs>
 <!-- apple -->
 <path d="M20.6 4.6 C21.8 4.6 22.6 3.6 22.8 2.2 C21.6 2.3 20.6 3.2 20.4 4.6 Z" fill="#111"/>
 <path d="M19.8 5.2 C18.6 5.2 17.6 4.6 16.6 4.8 C15 5 14 6.6 14 8.4 C14 10.8 15.6 13.4 17 13.4 C17.8 13.4 18.3 12.9 19.3 12.9 C20.3 12.9 20.7 13.4 21.6 13.4 C23 13.4 24.4 11.2 24.8 10 C23.5 9.4 22.9 8.3 22.9 7.1 C22.9 6.1 23.4 5.4 24.1 5 C23.4 4.9 22.6 4.8 21.9 4.8 C21 4.8 20.5 5.2 19.8 5.2 Z" fill="#111"/>
 <!-- traffic lights -->
 <circle cx="12.35" cy="27.65" r="5" fill="url(#tlr)" stroke="#7a2020" stroke-width="0.6"/>
 <circle cx="12.35" cy="27.8" r="1.6" fill="#5a0a0a"/>
 <ellipse cx="12.35" cy="24.6" rx="2" ry="1" fill="#ffb0b0" opacity="0.8"/>
 <circle cx="27.45" cy="27.65" r="5" fill="url(#tlo)" stroke="#8a5010" stroke-width="0.6"/>
 <ellipse cx="27.45" cy="24.6" rx="2" ry="1" fill="#fff4d0" opacity="0.9"/>
 <circle cx="42.9" cy="27.65" r="5" fill="url(#tlg)" stroke="#2a5a10" stroke-width="0.6"/>
 <ellipse cx="42.9" cy="24.6" rx="2" ry="1" fill="#e8ffd0" opacity="0.9"/>
 <!-- adium -->
 <path d="M656 14 C656 11.5 656.8 10 657.6 8.6 C657 4.5 659 1.8 661.4 1.8 C663.8 1.8 665.8 4.5 665.2 8.6 C666 10 666.8 11.5 666.8 14 Z" fill="#3c3c3c"/>
 <path d="M659.5 2.4 L660.5 0.8 L661.4 2 L662.4 0.8 L663 2.4 Z" fill="#3c3c3c"/>
 <ellipse cx="659.9" cy="6.6" rx="1.6" ry="1.9" fill="#c8e2f0"/><ellipse cx="662.9" cy="6.6" rx="1.6" ry="1.9" fill="#c8e2f0"/>
 <circle cx="660.4" cy="6.9" r="0.7" fill="#111"/><circle cx="662.4" cy="6.9" r="0.7" fill="#111"/>
 <ellipse cx="664.6" cy="10.6" rx="3.3" ry="2.5" fill="#5ccc38" stroke="#3a8a20" stroke-width="0.5"/>
 <ellipse cx="664.4" cy="9.6" rx="2" ry="0.9" fill="#b8f090"/>
 <!-- time machine -->
 <path d="M680.3 6.2 A5.2 5.2 0 1 1 681.2 10.6" stroke="#111" stroke-width="1.4" fill="none"/>
 <path d="M678.3 7.3 L680.6 5 L682.4 7.6 Z" fill="#111"/>
 <path d="M685.2 4 V7.6 L687.6 9.2" stroke="#111" stroke-width="1.1" fill="none"/>
 <!-- phone -->
 <path d="M702 4.2 C700.4 5 700.6 8.5 703.5 11.4 C706.2 13.8 708.6 13.4 709 12.4 L707.3 10.6 L705.8 11.2 C704.5 10.4 703.3 9 702.9 7.8 L703.9 6.5 Z" fill="#111"/>
 <path d="M705.5 8.5 L711 3.5" stroke="#bbb" stroke-width="1.2" stroke-dasharray="0.8,0.6"/>
 <!-- spaces -->
 <rect x="723.8" y="2" width="12.4" height="11" fill="#111"/>
 <rect x="729.5" y="2" width="1" height="11" fill="#d8d0dc"/><rect x="723.8" y="7" width="12.4" height="1" fill="#d8d0dc"/>
 <text x="727.2" y="11" font-family="Liberation Sans" font-weight="bold" font-size="8.4" fill="#f4f4f4">4</text>
 <!-- lock -->
 <rect x="749.6" y="7.6" width="7.2" height="5.6" rx="0.6" fill="#111"/>
 <path d="M751.2 7.8 V5.2 A2.2 2.2 0 0 1 755.6 5.2 V5.8" stroke="#111" stroke-width="1.3" fill="none"/>
 <!-- display -->
 <rect x="769" y="2.5" width="8" height="9.5" fill="#111" stroke="#777" stroke-width="0.8"/>
</svg>
</body></html>
